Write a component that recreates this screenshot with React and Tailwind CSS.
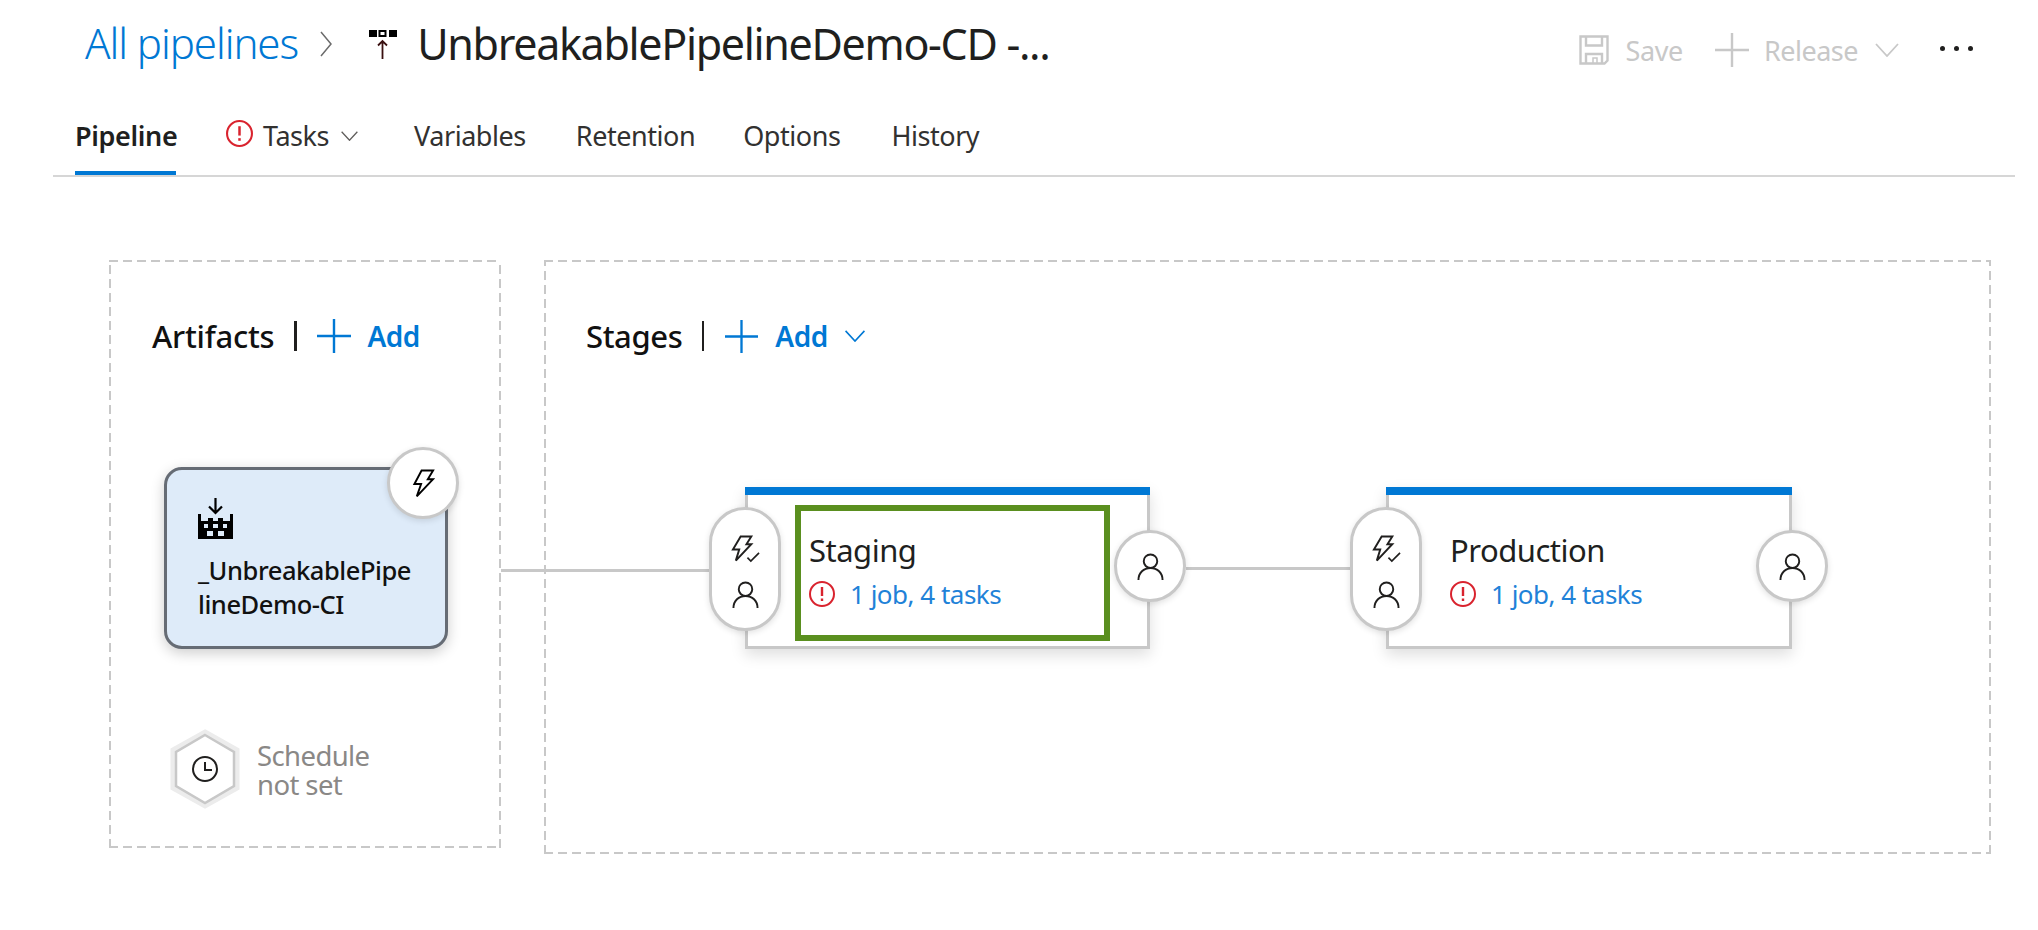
import React from "react";

const Bolt = ({ className = "" }) => (
  <svg viewBox="0 0 24 30" className={className} fill="none" stroke="currentColor" strokeWidth="2" strokeLinejoin="miter">
    <path d="M10 1.5h12l-5.5 9H22L5 28.5l4.5-13H2.5z" />
  </svg>
);
const BoltCheck = ({ className = "" }) => (
  <svg viewBox="0 0 30 28" className={className} fill="none" stroke="currentColor" strokeWidth="2">
    <path d="M10 1h11l-5 8h5L5 26l3.500-11.500H2z" />
    <path d="M17 23l3.500 3.500L29 18" strokeWidth="1.700" />
  </svg>
);
const Person = ({ className = "" }) => (
  <svg viewBox="0 0 28 28" className={className} fill="none" stroke="currentColor" strokeWidth="2">
    <circle cx="14" cy="8.500" r="7" />
    <path d="M1.500 28c0-7.500 5.500-12.500 12.500-12.500S26.500 20.500 26.500 28" />
  </svg>
);
const Plus = ({ className = "" }) => (
  <svg viewBox="0 0 34 34" className={className} stroke="currentColor" strokeWidth="2.400" fill="none">
    <path d="M17 0v34M0 17h34" />
  </svg>
);
const Chevron = ({ className = "" }) => (
  <svg viewBox="0 0 24 14" className={className} stroke="currentColor" strokeWidth="1.800" fill="none">
    <path d="M1 1l11 12L23 1" />
  </svg>
);
const ErrorIcon = ({ className = "" }) => (
  <svg viewBox="0 0 26 26" className={`text-[#d9232e] ${className}`} fill="none" stroke="currentColor" strokeWidth="2">
    <circle cx="13" cy="13" r="12" />
    <path d="M13 6v9" strokeWidth="2.400" />
    <path d="M13 17.500v2.500" strokeWidth="2.400" />
  </svg>
);

function Tab({ children, active, className = "" }) {
  return (
    <div className={`relative flex items-center h-[62px] pb-[17px] text-[27px] leading-none ${active ? "font-semibold text-[#201f1e]" : "text-[#323130]"} ${className}`}>
      {children}
      {active && <span className="absolute left-0 right-0 bottom-0 h-[4px] bg-[#0078d4]" />}
    </div>
  );
}

function StageCard({ name, selected, width = "w-[406px]" }) {
  return (
    <div className={`relative ${width} h-[162px] bg-white border-x-[3px] border-b-[3px] border-[#c8c8c8] shadow-[0_6px_14px_rgba(0,0,0,0.13)]`}>
      <div className="absolute -left-[3px] -right-[3px] top-0 h-[8px] bg-[#0078d4]" />
      {selected && <div className="absolute left-[47px] top-[18px] w-[315px] h-[136px] border-[6px] border-[#5a8f1f]" />}
      <div className="absolute left-[61px] top-[43px] w-[300px]">
        <div className="text-[31px] leading-[40px] text-[#201f1e] tracking-[-0.5px]">{name}</div>
        <div className="flex items-center gap-[15px] mt-[7px]">
          <ErrorIcon className="w-[26px] h-[26px]" />
          <span className="text-[26px] leading-[34px] text-[#1f82d8] tracking-[-0.5px]">1 job, 4 tasks</span>
        </div>
      </div>
      <div className="absolute -left-[39px] top-[20px] w-[72px] h-[124px] rounded-[36px] bg-white border-[3px] border-[#c8c8c8] shadow-[0_2px_6px_rgba(0,0,0,0.12)] flex flex-col items-center pt-[25px] gap-[18px] text-[#201f1e]">
        <BoltCheck className="w-[29px] h-[28px]" />
        <Person className="w-[27px] h-[27px]" />
      </div>
      <div className="absolute -right-[39px] top-[43px] w-[72px] h-[72px] rounded-full bg-white border-[3px] border-[#c8c8c8] shadow-[0_2px_6px_rgba(0,0,0,0.12)] flex items-center justify-center text-[#201f1e]">
        <Person className="w-[27px] h-[27px]" />
      </div>
    </div>
  );
}

const dashed =
  "[background:repeating-linear-gradient(90deg,#c8c8c8_0_9px,transparent_9px_14px)_top/100%_2px_no-repeat,repeating-linear-gradient(90deg,#c8c8c8_0_9px,transparent_9px_14px)_bottom/100%_2px_no-repeat,repeating-linear-gradient(0deg,#c8c8c8_0_9px,transparent_9px_14px)_left/2px_100%_no-repeat,repeating-linear-gradient(0deg,#c8c8c8_0_9px,transparent_9px_14px)_right/2px_100%_no-repeat]";

export default function App() {
  return (
    <div className="relative w-[2038px] h-[930px] bg-white overflow-hidden font-['Noto_Sans','Open_Sans',sans-serif]">
      {/* header */}
      <div className="flex items-center h-[88px] pl-[85px] pr-[65px]">
        <span className="text-[42px] font-light text-[#0078d4] leading-none tracking-[-1.05px] -mt-[2px]">All pipelines</span>
        <svg viewBox="0 0 12 26" className="w-[12px] h-[26px] ml-[22px] text-[#6b6b6b]" fill="none" stroke="currentColor" strokeWidth="1.500">
          <path d="M1 1l10 12L1 25" />
        </svg>
        <svg viewBox="0 0 28 29" className="w-[28px] h-[29px] ml-[37px] text-black">
          <rect x="0" y="0" width="8" height="7" fill="currentColor" />
          <rect x="10.500" y="1" width="6" height="5" fill="none" stroke="currentColor" strokeWidth="2" />
          <rect x="20" y="0" width="8" height="7" fill="currentColor" />
          <path d="M13.500 29V11M9 15.500l4.500-4.500 4.500 4.500" fill="none" stroke="#3a1010" strokeWidth="1.800" />
        </svg>
        <span className="ml-[20px] text-[43px] leading-none text-[#201f1e] tracking-[-1.32px] -mt-[2px]">UnbreakablePipelineDemo-CD -...</span>
        <div className="ml-auto flex items-center text-[#c8c8c8] mt-[12px]">
          <svg viewBox="0 0 30 30" className="w-[30px] h-[30px]" fill="none" stroke="currentColor" strokeWidth="2.400">
            <path d="M1.500 1.500h27v24l-3 3h-24z" />
            <path d="M7 1.500v9h16v-9M7 28v-9h16v9" />
            <path d="M14 28v-5h4v5" strokeWidth="1.500" />
          </svg>
          <span className="ml-[16px] text-[27px] leading-none tracking-[-0.35px]">Save</span>
          <Plus className="w-[34px] h-[34px] ml-[32px]" />
          <span className="ml-[15px] text-[27px] leading-none tracking-[-0.5px]">Release</span>
          <Chevron className="w-[24px] h-[14px] ml-[17px]" />
          <div className="flex gap-[9px] ml-[41px] -mt-[4px]">
            <span className="w-[5px] h-[5px] rounded-full bg-[#201f1e]" />
            <span className="w-[5px] h-[5px] rounded-full bg-[#201f1e]" />
            <span className="w-[5px] h-[5px] rounded-full bg-[#201f1e]" />
          </div>
        </div>
      </div>

      {/* tabs */}
      <div className="ml-[53px] w-[1962px] border-b-[2px] border-[#d6d6d6] h-[89px] flex items-end pl-[22px]">
        <Tab active className="w-[101px] tracking-[-0.35px]">Pipeline</Tab>
        <Tab className="ml-[50px] tracking-[-0.45px]">
          <ErrorIcon className="w-[27px] h-[27px] -mt-[4px]" />
          <span className="ml-[10px]">Tasks</span>
          <Chevron className="w-[19px] h-[10px] ml-[11px] text-[#605e5c]" />
        </Tab>
        <Tab className="ml-[55px] tracking-[-0.45px]">Variables</Tab>
        <Tab className="ml-[50px] tracking-[-0.45px]">Retention</Tab>
        <Tab className="ml-[48px] tracking-[-0.45px]">Options</Tab>
        <Tab className="ml-[51px] tracking-[-0.45px]">History</Tab>
      </div>

      {/* panels */}
      <div className="flex items-start pl-[109px] mt-[83px] gap-[43px]">
        <section className={`relative w-[392px] h-[588px] ${dashed}`}>
          <div className="flex items-center h-[50px] mt-[51px] ml-[43px]">
            <span className="text-[31px] leading-none font-medium text-[#111] tracking-[-0.25px]">Artifacts</span>
            <span className="w-[3px] h-[30px] bg-[#201f1e] ml-[20px]" />
            <Plus className="w-[34px] h-[34px] ml-[20px] text-[#0078d4]" />
            <span className="ml-[16px] text-[28px] leading-none font-semibold text-[#0078d4] tracking-[-0.5px]">Add</span>
          </div>
          <div className="relative ml-[55px] mt-[106px] w-[284px] h-[182px] rounded-[18px] bg-[#deebf9] border-[3px] border-[#666c75] shadow-[0_4px_14px_rgba(0,0,0,0.2)] pl-[31px] pt-[28px]">
            <svg viewBox="0 0 35 41" className="w-[35px] h-[41px] text-black" fill="currentColor">
              <path d="M17.500 0v14M11 8.500l6.500 6.500L24 8.500" fill="none" stroke="currentColor" strokeWidth="2.200" />
              <path fillRule="evenodd" d="M0 16h3v7h7v-3h5v3h5v-3h5v3h7v-7h3v25H0zM6 26v4h4v-4zM15 26v4h5v-4zM25 26v4h4v-4zM9 33v5h6v-5zM20 33v5h6v-5z" />
            </svg>
            <div className="mt-[14px] text-[25.500px] leading-[34px] font-medium text-[#111] tracking-[-0.45px]">
              <div>_UnbreakablePipe</div>
              <div>lineDemo-CI</div>
            </div>
            <div className="absolute -right-[14px] -top-[23px] w-[72px] h-[72px] rounded-full bg-white border-[3px] border-[#c8c8c8] shadow-[0_2px_6px_rgba(0,0,0,0.12)] flex items-center justify-center text-black">
              <Bolt className="w-[23px] h-[29px]" />
            </div>
          </div>
          <div className="flex items-center ml-[61px] mt-[80px]">
            <svg viewBox="0 0 70 80" className="w-[70px] h-[80px]" fill="none">
              <polygon points="35,3 67,21 67,59 35,77 3,59 3,21" stroke="#ececec" strokeWidth="5" />
              <polygon points="35,6 64,23 64,57 35,74 6,57 6,23" stroke="#c8c8c8" strokeWidth="2.500" />
              <circle cx="35" cy="40" r="12" stroke="#201f1e" strokeWidth="2" />
              <path d="M35 33v8h7" stroke="#201f1e" strokeWidth="2" />
            </svg>
            <div className="ml-[17px] text-[27.500px] leading-[29px] text-[#8a8886] tracking-[-0.6px] mt-[2px]">
              <div>Schedule</div>
              <div>not set</div>
            </div>
          </div>
          <span className="absolute left-[392px] top-[309px] w-[209px] h-[3px] bg-[#c8c8c8]" />
        </section>

        <section className={`relative w-[1447px] h-[594px] ${dashed}`}>
          <div className="flex items-center h-[50px] mt-[51px] ml-[42px]">
            <span className="text-[31px] leading-none font-medium text-[#111] tracking-[-0.4px]">Stages</span>
            <span className="w-[2px] h-[30px] bg-[#201f1e] ml-[20px]" />
            <Plus className="w-[33px] h-[33px] ml-[21px] text-[#0078d4]" />
            <span className="ml-[17px] text-[28px] leading-none font-semibold text-[#0078d4] tracking-[-0.5px]">Add</span>
            <Chevron className="w-[22px] h-[12px] ml-[16px] text-[#0078d4]" />
          </div>
          <div className="flex items-center ml-[201px] mt-[126px]">
            <StageCard name="Staging" selected width="w-[405px]" />
            <span className="w-[200px] h-[3px] bg-[#c8c8c8] mt-[1px] ml-[36px]" />
            <StageCard name="Production" width="w-[406px]" />
          </div>
        </section>
      </div>
    </div>
  );
}
